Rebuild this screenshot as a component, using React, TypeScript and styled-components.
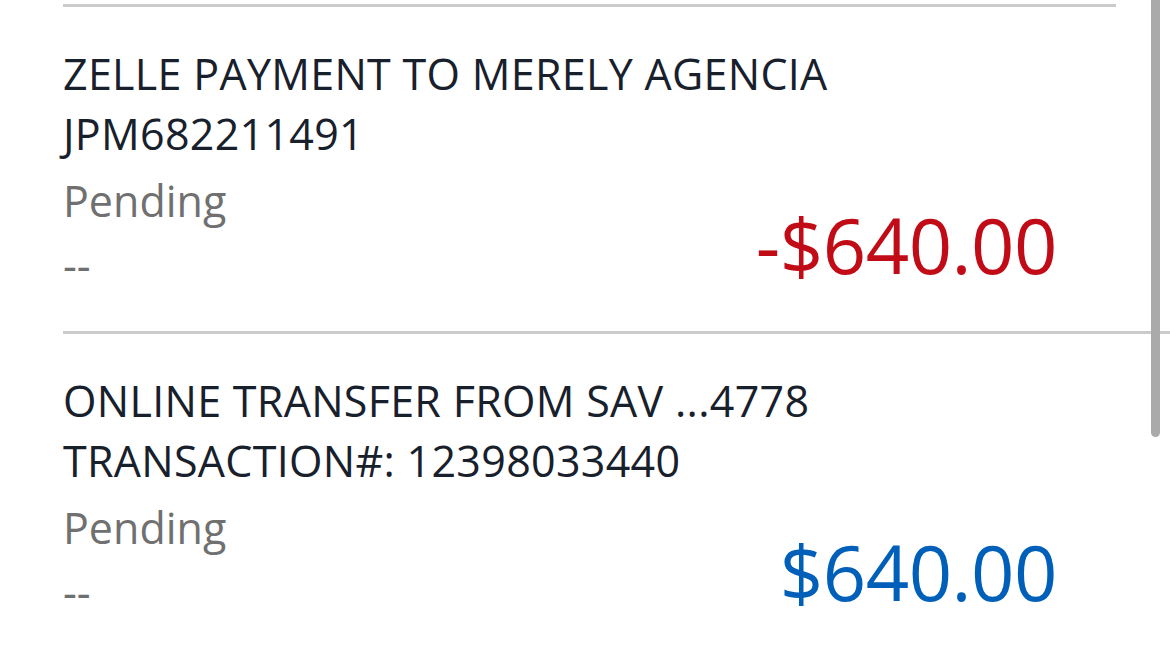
import React from "react";
import styled, { createGlobalStyle } from "styled-components";

const GlobalStyle = createGlobalStyle`
  html, body {
    margin: 0;
    padding: 0;
    background: #ffffff;
    overflow: hidden;
  }
  body {
    font-family: "Open Sans", "Noto Sans", "Liberation Sans", sans-serif;
  }
`;

const Screen = styled.div`
  position: relative;
  width: 1170px;
  height: 659px;
  overflow: hidden;
  background: #ffffff;
`;

const List = styled.div`
  display: flex;
  flex-direction: column;
  padding: 4px 54px 0 63px;
`;

const Divider = styled.div<{ $bleed?: boolean }>`
  height: 3px;
  background: #cbcbcb;
  margin-right: ${(p) => (p.$bleed ? "-54px" : "0")};
`;

const Row = styled.div`
  display: grid;
  grid-template-columns: 1fr auto;
  align-items: end;
  padding: 37px 59px 36px 0;
`;

const Details = styled.div`
  display: flex;
  flex-direction: column;
  min-width: 0;
`;

const Title = styled.div`
  font-size: 43px;
  line-height: 60px;
  color: #18202c;
  letter-spacing: 0.3px;
  white-space: nowrap;
`;

const Meta = styled.div<{ $gap?: number }>`
  font-size: 43px;
  line-height: 60px;
  color: #707070;
  margin-top: ${(p) => p.$gap ?? 0}px;
`;

const Amount = styled.div<{ $credit?: boolean }>`
  font-size: 76px;
  line-height: 76px;
  color: ${(p) => (p.$credit ? "#0060b9" : "#c10b16")};
  margin-bottom: 12px;
  letter-spacing: -0.5px;
  white-space: nowrap;
`;

const Scrollbar = styled.div`
  position: absolute;
  top: -10px;
  left: 1151px;
  width: 9px;
  height: 447px;
  border-radius: 5px;
  background: #aaaaaa;
`;

type Tx = {
  title: string[];
  status: string;
  note: string;
  amount: string;
  credit?: boolean;
};

const transactions: Tx[] = [
  {
    title: ["ZELLE PAYMENT TO MERELY AGENCIA", "JPM682211491"],
    status: "Pending",
    note: "--",
    amount: "-$640.00",
  },
  {
    title: ["ONLINE TRANSFER FROM SAV ...4778", "TRANSACTION#: 12398033440"],
    status: "Pending",
    note: "--",
    amount: "$640.00",
    credit: true,
  },
];

export default function App() {
  return (
    <Screen>
      <GlobalStyle />
      <List>
        {transactions.map((tx, i) => (
          <React.Fragment key={i}>
            <Divider $bleed={i > 0} />
            <Row>
              <Details>
                {tx.title.map((line) => (
                  <Title key={line}>{line}</Title>
                ))}
                <Meta $gap={7}>{tx.status}</Meta>
                <Meta $gap={4}>{tx.note}</Meta>
              </Details>
              <Amount $credit={tx.credit}>{tx.amount}</Amount>
            </Row>
          </React.Fragment>
        ))}
      </List>
      <Scrollbar />
    </Screen>
  );
}
